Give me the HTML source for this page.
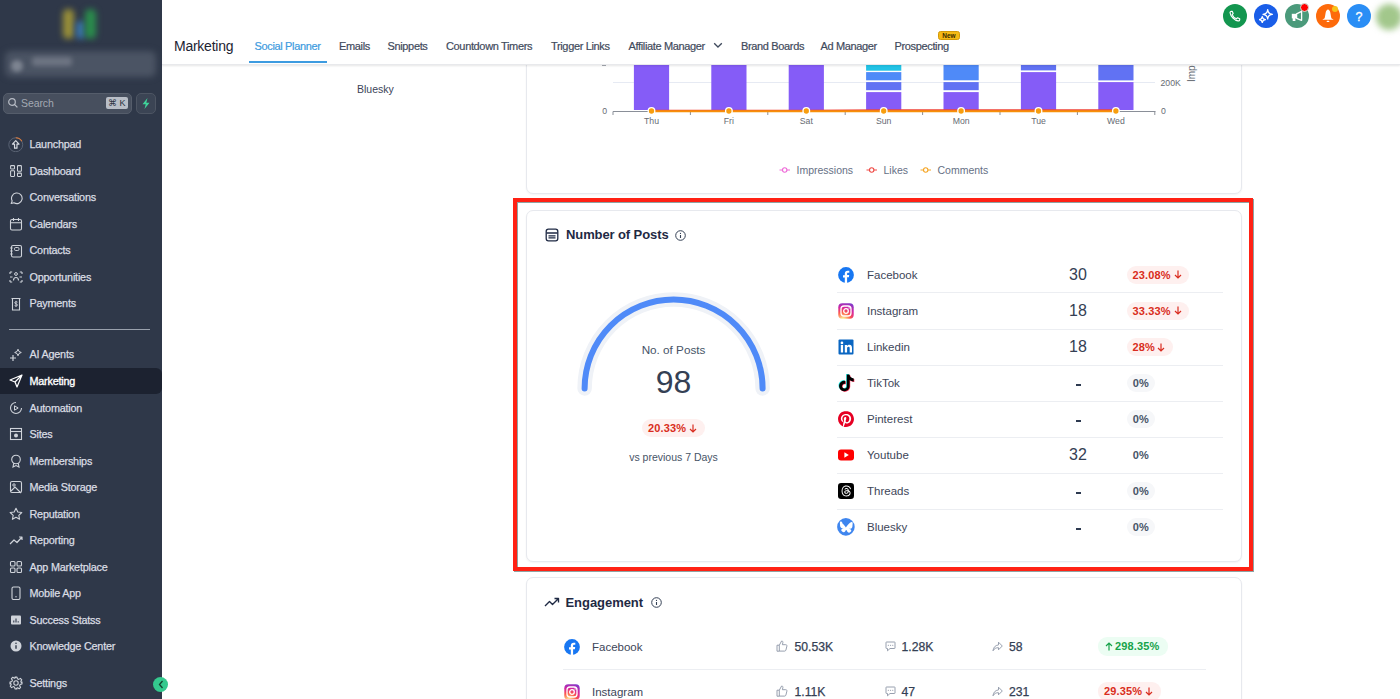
<!DOCTYPE html>
<html><head><meta charset="utf-8">
<style>
*{box-sizing:border-box;margin:0;padding:0}
html,body{width:1400px;height:699px;overflow:hidden;background:#fff;font-family:"Liberation Sans",sans-serif;position:relative}
.a{position:absolute;white-space:nowrap}
#sb{position:absolute;left:0;top:0;width:162px;height:699px;background:#2f3849;z-index:5}
.ni{position:absolute;left:0;width:162px;height:26px;}
.ni .t{position:absolute;left:29.5px;top:5.8px;font-size:10.8px;letter-spacing:-0.2px;color:#dadde3;line-height:14px;-webkit-text-stroke:0.25px #dadde3}
.ni svg{position:absolute;left:9px;top:6px;width:14px;height:14px}
#hd{position:absolute;left:162px;top:0;width:1238px;height:65px;background:#fff;z-index:4;box-shadow:0 1px 2px rgba(0,0,0,0.10);border-bottom:1px solid #e8e9ec}
.tab{position:absolute;top:38.5px;font-size:11px;letter-spacing:-0.35px;color:#3f4a5c;line-height:14px;-webkit-text-stroke:0.2px #3f4a5c}
.card{position:absolute;left:526px;width:716px;background:#fff;border:1px solid #e7e9ee;border-radius:7px;box-shadow:0 1px 2px rgba(16,24,40,0.05)}
.pl{position:absolute;left:838px;width:16px;height:16px;overflow:visible}
.pn{position:absolute;left:867px;font-size:11.5px;color:#3d4659;line-height:14px;margin-top:0.6px}
.pv{position:absolute;font-size:16px;color:#344054;line-height:18px}
.pill{position:absolute;height:18px;border-radius:9px;font-size:11px;font-weight:700;letter-spacing:0.15px;line-height:18px;padding:0 6px}
.red{background:#fef0ef;color:#d92d20}
.gry{background:#f6f7f9;color:#475467}
.grn{background:#ecfdf3;color:#16a34a}
.dv{position:absolute;left:837px;width:386px;height:1px;background:#eceef2}
</style></head>
<body>
<!-- SIDEBAR -->
<div id="sb">
  <div class="a" style="left:63px;top:9px;width:11px;height:30px;background:#9a9038;border-radius:5px;filter:blur(3px)"></div>
  <div class="a" style="left:76px;top:21px;width:9px;height:18px;background:#3a74ad;border-radius:4px;filter:blur(3px)"></div>
  <div class="a" style="left:85px;top:9px;width:11px;height:30px;background:#2a8d4c;border-radius:5px;filter:blur(3px)"></div>
  <div class="a" style="left:5px;top:51px;width:151px;height:26px;background:#4b5464;border-radius:6px;filter:blur(3px)"></div>
  <div class="a" style="left:11px;top:60px;width:12px;height:12px;background:#7d8491;border-radius:50%;filter:blur(2px)"></div>
  <div class="a" style="left:32px;top:57px;width:40px;height:9px;background:#6e7583;border-radius:3px;filter:blur(2.5px)"></div>

  <div class="a" style="left:3px;top:93px;width:129px;height:21px;background:#474f5e;border:1px solid #555d6b;border-radius:5px"></div>
  <svg class="a" style="left:7px;top:97px" width="12" height="12" viewBox="0 0 12 12"><circle cx="5" cy="5" r="3.3" fill="none" stroke="#b8bdc6" stroke-width="1.2"/><path d="M7.4 7.4l3 3" stroke="#b8bdc6" stroke-width="1.3"/></svg>
  <span class="a" style="left:21px;top:97px;font-size:10.5px;color:#a3a9b3;line-height:12px;letter-spacing:-0.1px">Search</span>
  <div class="a" style="left:106px;top:97px;width:22px;height:12px;background:#b9bec7;border-radius:2px"></div>
  <span class="a" style="left:108px;top:97px;font-size:9px;color:#2b3240;line-height:12px">&#8984;&nbsp;K</span>
  <div class="a" style="left:136px;top:93px;width:20px;height:21px;background:#3b4454;border:1px solid #4d5563;border-radius:5px"></div>
  <svg class="a" style="left:141px;top:98px" width="10" height="11" viewBox="0 0 10 11"><path d="M6.5 0L1.5 6.3h3.2L3.5 11l5-6.3H5.3z" fill="#3fd49a"/></svg>
  <div class="a" style="left:9px;top:328.5px;width:141px;height:1px;background:#9aa1ad"></div>
<div class="ni" style="top:131.7px"><svg viewBox="0 0 14 14" style="left:8.3px;top:5px;width:15.5px;height:15.5px"><circle cx="7" cy="7" r="6.3" fill="none" stroke="#596273" stroke-width="0.9"/><path d="M7 0.7a6.3 6.3 0 0 1 5.5 3.2" fill="none" stroke="#e07b39" stroke-width="1"/><path d="M7 3.3L4 6.4H5.9v3.700h2.2V6.400H10z" fill="none" stroke="#d8dce3" stroke-width="1.05" stroke-linejoin="round"/></svg><span class="t">Launchpad</span></div>
<div class="ni" style="top:158.3px"><svg viewBox="0 0 14 14"><rect x="1.6" y="1.6" width="3.9" height="3.3" rx="0.6" fill="none" stroke="#cfd3da" stroke-width="1.05"/><rect x="1.6" y="6.7" width="3.9" height="5.7" rx="0.6" fill="none" stroke="#cfd3da" stroke-width="1.05"/><rect x="8.5" y="1.6" width="3.9" height="5.7" rx="0.6" fill="none" stroke="#cfd3da" stroke-width="1.05"/><rect x="8.5" y="9.1" width="3.9" height="3.3" rx="0.6" fill="none" stroke="#cfd3da" stroke-width="1.05"/></svg><span class="t">Dashboard</span></div>
<div class="ni" style="top:184.6px"><svg viewBox="0 0 14 14"><path d="M2.2 12.5l1-2.6A5.3 5.3 0 1 1 5 11.8z" fill="none" stroke="#cfd3da" stroke-width="1.1" stroke-linejoin="round"/></svg><span class="t">Conversations</span></div>
<div class="ni" style="top:211.1px"><svg viewBox="0 0 14 14"><rect x="1.5" y="2.5" width="11" height="10.5" rx="1.5" fill="none" stroke="#cfd3da" stroke-width="1.1"/><path d="M1.5 5.8h11M4.5 1v3M9.5 1v3" stroke="#cfd3da" stroke-width="1.1"/></svg><span class="t">Calendars</span></div>
<div class="ni" style="top:237.6px"><svg viewBox="0 0 14 14"><rect x="2.5" y="1.5" width="10" height="11.5" rx="1.5" fill="none" stroke="#cfd3da" stroke-width="1.1"/><path d="M1.2 4h2.5M1.2 7h2.5M1.2 10h2.5" stroke="#cfd3da" stroke-width="1"/><rect x="5.5" y="3.5" width="4.5" height="3" rx="1.2" fill="none" stroke="#cfd3da" stroke-width="1"/></svg><span class="t">Contacts</span></div>
<div class="ni" style="top:264.1px"><svg viewBox="0 0 14 14"><circle cx="7" cy="4" r="1.4" fill="none" stroke="#cfd3da" stroke-width="1"/><path d="M1 2h2.2M1 2v2M13 2h-2.2M13 2v2M1 12h2.2M1 12v-2M13 12h-2.2M13 12v-2M4.5 10.5c0-2 1-3 2.5-3s2.5 1 2.5 3" fill="none" stroke="#cfd3da" stroke-width="1.1"/><path d="M1 7h2.5M10.5 7H13" stroke="#cfd3da" stroke-width="1.1"/></svg><span class="t">Opportunities</span></div>
<div class="ni" style="top:290.6px"><svg viewBox="0 0 14 14"><path d="M2.5 1.5h9M3.5 1.5v11.5h7V1.5" fill="none" stroke="#cfd3da" stroke-width="1.1"/><path d="M8.5 5.2c-.4-.6-2.8-.8-2.8.6 0 1.3 2.8.8 2.8 2.2 0 1.3-2.4 1.2-2.9.5M7 3.8v6" fill="none" stroke="#cfd3da" stroke-width="0.9"/></svg><span class="t">Payments</span></div>
<div class="ni" style="top:341.7px"><svg viewBox="0 0 14 14"><path d="M9 1.2l1 2.3 2.3 1-2.3 1L9 7.8l-1-2.3-2.3-1 2.3-1z" fill="none" stroke="#cfd3da" stroke-width="1"/><path d="M4 7v6M1 10h6" stroke="#cfd3da" stroke-width="1.2"/></svg><span class="t">AI Agents</span></div>
<div class="ni" style="top:368.4px;background:#1c2230;border-radius:0 6px 6px 0;"><svg viewBox="0 0 14 14"><path d="M13 1L1 6l5 2 2 5z M13 1L6 8" fill="none" stroke="#ffffff" stroke-width="1.2" stroke-linejoin="round"/></svg><span class="t" style="color:#fff;-webkit-text-stroke:0.35px #fff">Marketing</span></div>
<div class="ni" style="top:394.9px"><svg viewBox="0 0 14 14"><path d="M12.5 7A5.5 5.5 0 1 1 7 1.5" fill="none" stroke="#cfd3da" stroke-width="1.1"/><path d="M5.5 4.8v4.4L9.2 7z" fill="none" stroke="#cfd3da" stroke-width="1"/></svg><span class="t">Automation</span></div>
<div class="ni" style="top:421.4px"><svg viewBox="0 0 14 14"><rect x="1.5" y="1.5" width="11" height="11" fill="none" stroke="#cfd3da" stroke-width="1.1"/><path d="M1.5 4.5h11" stroke="#cfd3da" stroke-width="1.1"/><circle cx="7" cy="8.5" r="2" fill="#cfd3da"/></svg><span class="t">Sites</span></div>
<div class="ni" style="top:447.9px"><svg viewBox="0 0 14 14"><circle cx="7" cy="5.5" r="4.3" fill="none" stroke="#cfd3da" stroke-width="1.1"/><path d="M4.8 9.2L4 13l3-1.5 3 1.5-.8-3.8" fill="none" stroke="#cfd3da" stroke-width="1.1"/></svg><span class="t">Memberships</span></div>
<div class="ni" style="top:474.4px"><svg viewBox="0 0 14 14"><rect x="1.5" y="1.5" width="11" height="11" rx="1.5" fill="none" stroke="#cfd3da" stroke-width="1.1"/><circle cx="5" cy="5" r="1.2" fill="none" stroke="#cfd3da" stroke-width="1"/><path d="M2 11l4-4 6 6" fill="none" stroke="#cfd3da" stroke-width="1.1"/></svg><span class="t">Media Storage</span></div>
<div class="ni" style="top:500.9px"><svg viewBox="0 0 14 14"><path d="M7 1.2l1.8 3.8 4 .5-3 2.8.8 4L7 10.3l-3.6 2 .8-4-3-2.8 4-.5z" fill="none" stroke="#cfd3da" stroke-width="1.1" stroke-linejoin="round"/></svg><span class="t">Reputation</span></div>
<div class="ni" style="top:527.4px"><svg viewBox="0 0 14 14"><path d="M1 11l4-4 3 2.5L13 4M10 4h3v3" fill="none" stroke="#cfd3da" stroke-width="1.2" stroke-linejoin="round"/></svg><span class="t">Reporting</span></div>
<div class="ni" style="top:553.9px"><svg viewBox="0 0 14 14"><rect x="1.5" y="1.5" width="4.5" height="4.5" rx="1" fill="none" stroke="#cfd3da" stroke-width="1.1"/><rect x="8" y="1.5" width="4.5" height="4.5" rx="1" fill="none" stroke="#cfd3da" stroke-width="1.1"/><rect x="1.5" y="8" width="4.5" height="4.5" rx="1" fill="none" stroke="#cfd3da" stroke-width="1.1"/><rect x="8" y="8" width="4.5" height="4.5" rx="1" fill="none" stroke="#cfd3da" stroke-width="1.1"/></svg><span class="t">App Marketplace</span></div>
<div class="ni" style="top:580.4px"><svg viewBox="0 0 14 14"><rect x="3" y="1" width="8" height="12.5" rx="1.5" fill="none" stroke="#cfd3da" stroke-width="1.1"/><circle cx="7" cy="10.8" r="0.7" fill="#cfd3da"/></svg><span class="t">Mobile App</span></div>
<div class="ni" style="top:606.9px"><svg viewBox="0 0 14 14"><rect x="2" y="2.5" width="10" height="9" rx="1" fill="#cfd3da"/><path d="M4.8 9.5v-2M7 9.5v-4M9.2 9.5v-1.2" stroke="#2f3849" stroke-width="1.1"/></svg><span class="t">Success Statss</span></div>
<div class="ni" style="top:633.4px"><svg viewBox="0 0 14 14"><circle cx="7" cy="7" r="5.5" fill="#cfd3da"/><path d="M7 6.2v3.6" stroke="#2f3849" stroke-width="1.4"/><circle cx="7" cy="4.3" r="0.8" fill="#2f3849"/></svg><span class="t">Knowledge Center</span></div>
<div class="ni" style="top:669.9px"><svg viewBox="0 0 14 14"><circle cx="7" cy="7" r="2.2" fill="none" stroke="#cfd3da" stroke-width="1.1"/><path d="M6 1h2l.4 1.8 1.4.6 1.6-1 1.4 1.4-1 1.6.6 1.4L13 6v2l-1.8.4-.6 1.4 1 1.6-1.4 1.4-1.6-1-1.4.6L8 13H6l-.4-1.8-1.4-.6-1.6 1-1.4-1.4 1-1.6-.6-1.4L1 8V6l1.8-.4.6-1.4-1-1.6 1.4-1.4 1.6 1 1.4-.6z" fill="none" stroke="#cfd3da" stroke-width="1.1" stroke-linejoin="round"/></svg><span class="t">Settings</span></div>
  <div class="a" style="left:153px;top:677px;width:15px;height:15px;border-radius:50%;background:#34c98e;z-index:6"></div>
  <svg class="a" style="left:157px;top:680px;z-index:7" width="8" height="9" viewBox="0 0 8 9"><path d="M5.5 1L2.5 4.5 5.5 8" fill="none" stroke="#14432f" stroke-width="1.3"/></svg>
</div>
<!-- HEADER -->
<div id="hd">
  <span class="a" style="left:12px;top:37.5px;font-size:14px;letter-spacing:-0.25px;color:#1d2433;line-height:16px">Marketing</span>
  <span class="tab" style="left:92.5px;color:#3d9be0;-webkit-text-stroke:0.2px #3d9be0">Social Planner</span>
  <div class="a" style="left:87px;top:61px;width:78px;height:2px;background:#3d9be0"></div>
  <span class="tab" style="left:177px">Emails</span>
  <span class="tab" style="left:225.5px">Snippets</span>
  <span class="tab" style="left:284px">Countdown Timers</span>
  <span class="tab" style="left:389px">Trigger Links</span>
  <span class="tab" style="left:466.5px">Affiliate Manager</span>
  <svg class="a" style="left:551px;top:42px" width="10" height="7" viewBox="0 0 10 7"><path d="M1.2 1.2L5 5l3.8-3.8" fill="none" stroke="#3f4a5c" stroke-width="1.3"/></svg>
  <span class="tab" style="left:579px">Brand Boards</span>
  <span class="tab" style="left:658.5px">Ad Manager</span>
  <span class="tab" style="left:732.5px">Prospecting</span>
  <div class="a" style="left:776px;top:31px;width:22px;height:9px;background:#f5b915;border:0.5px solid #d39a0a;border-radius:2.5px;font-size:6.5px;font-weight:700;color:#3a2c00;line-height:8px;text-align:center">New</div>
  <div class="a" style="left:1061px;top:4px;width:24px;height:24px;border-radius:50%;background:#13964f"></div>
  <svg class="a" style="left:1067px;top:10px" width="12" height="12" viewBox="0 0 12 12"><path d="M2.4 1.3C1.500 1.300 .900 2 1.100 3C1.700 6.500 5.500 10.300 9 10.900C10 11.100 10.700 10.500 10.700 9.700L10.700 8.800L8.600 7.800L7.400 8.800C5.800 8.200 3.800 6.200 3.200 4.600L4.200 3.400L3.200 1.300Z" fill="none" stroke="#fff" stroke-width="1.15" stroke-linejoin="round"/></svg>
  <div class="a" style="left:1092px;top:4px;width:24px;height:24px;border-radius:50%;background:#1a5ee8"></div>
  <svg class="a" style="left:1097px;top:9px" width="14" height="14" viewBox="0 0 14 14"><path d="M8.7 0.6Q9.1 4.9 13.4 5.3Q9.1 5.7 8.7 10Q8.3 5.7 4 5.3Q8.3 4.9 8.7 0.6Z" fill="none" stroke="#fff" stroke-width="1.25" stroke-linejoin="round"/><path d="M3.3 7.5Q3.6 10.3 6.4 10.6Q3.6 10.9 3.3 13.7Q3 10.9 0.2 10.6Q3 10.3 3.3 7.5Z" fill="none" stroke="#fff" stroke-width="1.25" stroke-linejoin="round"/></svg>
  <div class="a" style="left:1123px;top:4px;width:24px;height:24px;border-radius:50%;background:#4b9a7b"></div>
  <svg class="a" style="left:1129px;top:10px" width="12" height="12" viewBox="0 0 12 12"><rect x="0.8" y="3.8" width="4.9" height="4.6" fill="#fff"/><rect x="1.7" y="8" width="2.7" height="3" fill="#fff"/><path d="M5.6 3.9L10.6 1.3V10.3L5.6 8.3z" fill="none" stroke="#fff" stroke-width="1.3" stroke-linejoin="round"/></svg>
  <div class="a" style="left:1138px;top:3px;width:9px;height:9px;border-radius:50%;background:#ff0000;border:0.8px solid #cfe3da"></div>
  <div class="a" style="left:1154px;top:4px;width:24px;height:24px;border-radius:50%;background:#fd6a0b"></div>
  <svg class="a" style="left:1160px;top:9px" width="12" height="14" viewBox="0 0 12 14"><path d="M6 0.6C4.900 0.600 4.100 2 3.700 3.600L3 7.400 2.600 9.200 0.300 10.700H11.700L9.400 9.200 9 7.400 8.300 3.600C7.900 2 7.100 0.600 6 0.600z" fill="#fff"/><rect x="4.700" y="11.800" width="2.600" height="1.200" rx="0.5" fill="#fff"/></svg>
  <div class="a" style="left:1170px;top:6px;width:6px;height:6px;border-radius:50%;background:#f6c21a"></div>
  <div class="a" style="left:1185px;top:4px;width:24px;height:24px;border-radius:50%;background:#2a8ef5"></div>
  <span class="a" style="left:1185px;top:8.5px;width:24px;text-align:center;font-size:12.5px;font-weight:400;color:#fff;line-height:16px;-webkit-text-stroke:0.3px #fff">?</span>
  <div class="a" style="left:1214px;top:3.5px;width:26px;height:26px;border-radius:50%;background:#a2c78b;filter:blur(3px)"></div>
</div>
<!-- CONTENT -->
<div class="a" style="left:602px;top:65px;width:4px;height:1px;background:#9a9ea5;z-index:4"></div>
<span class="a" style="left:357px;top:82.8px;font-size:10.5px;color:#3b4458;line-height:12px">Bluesky</span>
<div class="card" style="top:20px;height:174px"></div>
<svg class="a" style="left:0;top:0;z-index:1" width="1400" height="200" viewBox="0 0 1400 200">
<line x1="613" y1="82.5" x2="1155" y2="82.5" stroke="#e6eaf3" stroke-width="1"/>
<rect x="633.9" y="0" width="35.2" height="110.0" fill="#855cf7"/>
<rect x="711.3" y="0" width="35.2" height="110.0" fill="#855cf7"/>
<rect x="788.7" y="0" width="35.2" height="110.0" fill="#855cf7"/>
<rect x="866.1" y="0" width="35.2" height="70.7" fill="#22c3e6"/>
<rect x="866.1" y="72.1" width="35.2" height="8.2" fill="#4f8af8"/>
<rect x="866.1" y="82.1" width="35.2" height="8.1" fill="#6172f3"/>
<rect x="866.1" y="92.1" width="35.2" height="17.9" fill="#855cf7"/>
<rect x="943.5" y="0" width="35.2" height="80.3" fill="#4f8af8"/>
<rect x="943.5" y="82.1" width="35.2" height="8.1" fill="#6172f3"/>
<rect x="943.5" y="92.1" width="35.2" height="17.9" fill="#855cf7"/>
<rect x="1020.9" y="0" width="35.2" height="70.4" fill="#6172f3"/>
<rect x="1020.9" y="72.1" width="35.2" height="37.9" fill="#855cf7"/>
<rect x="1098.3" y="0" width="35.2" height="80.4" fill="#6172f3"/>
<rect x="1098.3" y="82.1" width="35.2" height="27.9" fill="#855cf7"/>
<line x1="613" y1="111.5" x2="1155.5" y2="111.5" stroke="#8a8f98" stroke-width="1"/>
<line x1="613.0" y1="111.5" x2="613.0" y2="115" stroke="#8a8f98" stroke-width="1"/>
<line x1="690.4" y1="111.5" x2="690.4" y2="115" stroke="#8a8f98" stroke-width="1"/>
<line x1="767.8" y1="111.5" x2="767.8" y2="115" stroke="#8a8f98" stroke-width="1"/>
<line x1="845.2" y1="111.5" x2="845.2" y2="115" stroke="#8a8f98" stroke-width="1"/>
<line x1="922.6" y1="111.5" x2="922.6" y2="115" stroke="#8a8f98" stroke-width="1"/>
<line x1="1000.0" y1="111.5" x2="1000.0" y2="115" stroke="#8a8f98" stroke-width="1"/>
<line x1="1077.4" y1="111.5" x2="1077.4" y2="115" stroke="#8a8f98" stroke-width="1"/>
<line x1="1154.8" y1="111.5" x2="1154.8" y2="115" stroke="#8a8f98" stroke-width="1"/>
<polyline points="651.5,110.8 728.9,110.8 806.3,110.8 883.7,110.3 961.1,110.3 1038.5,110.3 1115.9,110.3" fill="none" stroke="#f04438" stroke-width="2"/>
<polyline points="651.5,111.3 728.9,111.3 806.3,111.3 883.7,111.3 961.1,111.3 1038.5,111.3 1115.9,111.3" fill="none" stroke="#f79009" stroke-width="2"/>
<circle cx="651.5" cy="111" r="3.3" fill="#f79e0f" stroke="#fff" stroke-width="1.3"/>
<circle cx="728.9" cy="111" r="3.3" fill="#f79e0f" stroke="#fff" stroke-width="1.3"/>
<circle cx="806.3" cy="111" r="3.3" fill="#f79e0f" stroke="#fff" stroke-width="1.3"/>
<circle cx="883.7" cy="111" r="3.3" fill="#f79e0f" stroke="#fff" stroke-width="1.3"/>
<circle cx="961.1" cy="111" r="3.3" fill="#f79e0f" stroke="#fff" stroke-width="1.3"/>
<circle cx="1038.5" cy="111" r="3.3" fill="#f79e0f" stroke="#fff" stroke-width="1.3"/>
<circle cx="1115.9" cy="111" r="3.3" fill="#f79e0f" stroke="#fff" stroke-width="1.3"/>
</svg>
<span class="a" style="left:631.5px;top:116px;width:40px;text-align:center;font-size:8.7px;color:#666b73;line-height:10px">Thu</span>
<span class="a" style="left:708.9px;top:116px;width:40px;text-align:center;font-size:8.7px;color:#666b73;line-height:10px">Fri</span>
<span class="a" style="left:786.3px;top:116px;width:40px;text-align:center;font-size:8.7px;color:#666b73;line-height:10px">Sat</span>
<span class="a" style="left:863.7px;top:116px;width:40px;text-align:center;font-size:8.7px;color:#666b73;line-height:10px">Sun</span>
<span class="a" style="left:941.1px;top:116px;width:40px;text-align:center;font-size:8.7px;color:#666b73;line-height:10px">Mon</span>
<span class="a" style="left:1018.5px;top:116px;width:40px;text-align:center;font-size:8.7px;color:#666b73;line-height:10px">Tue</span>
<span class="a" style="left:1095.9px;top:116px;width:40px;text-align:center;font-size:8.7px;color:#666b73;line-height:10px">Wed</span>
<span class="a" style="left:597px;top:106px;width:10px;text-align:right;font-size:8.7px;color:#666b73;line-height:10px">0</span>
<span class="a" style="left:1161px;top:106px;font-size:8.7px;color:#666b73;line-height:10px">0</span>
<span class="a" style="left:1160.5px;top:77.5px;font-size:8.7px;color:#666b73;line-height:10px">200K</span>
<span class="a" style="left:1187px;top:68px;font-size:10px;color:#666b73;line-height:10px;transform:rotate(-90deg);transform-origin:0 0;top:81.5px">Impressions</span>
<svg class="a" style="left:779px;top:165px" width="12" height="10" viewBox="0 0 12 10"><path d="M0.5 5h10.5" stroke="#ee6ad8" stroke-width="1"/><circle cx="5.7" cy="5" r="2.2" fill="#fff" stroke="#ee6ad8" stroke-width="1.1"/></svg>
<span class="a" style="left:796.5px;top:164px;font-size:10.5px;color:#667085;line-height:12px">Impressions</span>
<svg class="a" style="left:866px;top:165px" width="12" height="10" viewBox="0 0 12 10"><path d="M0.5 5h10.5" stroke="#ef4a45" stroke-width="1"/><circle cx="5.7" cy="5" r="2.2" fill="#fff" stroke="#ef4a45" stroke-width="1.1"/></svg>
<span class="a" style="left:883.5px;top:164px;font-size:10.5px;color:#667085;line-height:12px">Likes</span>
<svg class="a" style="left:920px;top:165px" width="12" height="10" viewBox="0 0 12 10"><path d="M0.5 5h10.5" stroke="#f5a524" stroke-width="1"/><circle cx="5.7" cy="5" r="2.2" fill="#fff" stroke="#f5a524" stroke-width="1.1"/></svg>
<span class="a" style="left:937.5px;top:164px;font-size:10.5px;color:#667085;line-height:12px">Comments</span>

<div class="a" style="left:514px;top:199px;width:740px;height:373px;border:4px solid #8fa3a3;z-index:3;filter:blur(0.4px)"></div>
<div class="a" style="left:513px;top:198px;width:740px;height:373px;border:4px solid #ff2114;z-index:3"></div>
<div class="card" style="top:209.5px;height:352px"></div>
<svg class="a" style="left:545px;top:228px" width="14" height="14" viewBox="0 0 14 14"><rect x="1.2" y="1.2" width="11.6" height="11.6" rx="2.2" fill="none" stroke="#1f2a44" stroke-width="1.3"/><path d="M1.5 5h11M3.5 7.8h7M3.5 9.8h7" stroke="#1f2a44" stroke-width="1.3"/></svg>
<span class="a" style="left:566px;top:227px;font-size:13px;font-weight:700;letter-spacing:-0.1px;color:#1f2a44;line-height:16px">Number of Posts</span>
<svg class="a" style="left:675px;top:229.5px" width="11" height="11" viewBox="0 0 11 11"><circle cx="5.5" cy="5.5" r="4.8" fill="none" stroke="#344054" stroke-width="1"/><path d="M5.5 5v3" stroke="#344054" stroke-width="1.1"/><circle cx="5.5" cy="3.4" r="0.6" fill="#344054"/></svg>
<svg class="a" style="left:560px;top:280px" width="230" height="130" viewBox="560 280 230 130"><path d="M584.6 388.5 A89 89 0 0 1 762.6 388.5" fill="none" stroke="#eff2f7" stroke-width="14.5" stroke-linecap="round"/><path d="M584.6 388.5 A89 89 0 0 1 762.6 388.5" fill="none" stroke="#4f8af8" stroke-width="6" stroke-linecap="round"/></svg>
<span class="a" style="left:600px;top:343px;width:147px;text-align:center;font-size:11.7px;color:#475467;line-height:14px">No. of Posts</span>
<span class="a" style="left:600px;top:365px;width:147px;text-align:center;font-size:32px;color:#344054;line-height:34px">98</span>
<div class="pill red" style="left:642px;top:419px;width:62.5px;padding:0 0 0 6px">20.33%<svg style="position:absolute;right:7.5px;top:4.5px" width="8" height="9" viewBox="0 0 8 9"><path d="M4 0.5v7.5M1 5l3 3 3-3" fill="none" stroke="#d92d20" stroke-width="1.2"/></svg></div>
<span class="a" style="left:600px;top:451px;width:147px;text-align:center;font-size:10.5px;color:#475467;line-height:12px">vs previous 7 Days</span>
<svg class="pl" style="top:266.6px" viewBox="0 0 16 16"><circle cx="8" cy="8" r="7.9" fill="#1877f2"/><path d="M9.1 16V10.3h1.8l.3-2.2H9.1V6.800c0-.6.2-1.100 1.100-1.100h1.100V3.800c-.2 0-.9-.1-1.700-.1-1.700 0-2.800 1-2.800 2.900v1.600H5v2.200h1.800V16z" fill="#fff"/></svg>
<span class="pn" style="top:267.1px">Facebook</span>
<span class="pv" style="left:1048px;width:60px;text-align:center;top:265.6px">30</span>
<div class="pill red" style="left:1126.5px;top:265.6px;width:62.5px;padding:0 0 0 6px">23.08%<svg style="position:absolute;right:7.5px;top:4.5px" width="8" height="9" viewBox="0 0 8 9"><path d="M4 0.5v7.5M1 5l3 3 3-3" fill="none" stroke="#d92d20" stroke-width="1.2"/></svg></div>
<div class="dv" style="top:292.3px"></div>
<svg class="pl" style="top:302.8px" viewBox="0 0 16 16"><defs><radialGradient id="ig" cx="0.3" cy="1.07" r="1.25"><stop offset="0" stop-color="#fdf497"/><stop offset="0.05" stop-color="#fdf497"/><stop offset="0.4" stop-color="#fd5949"/><stop offset="0.65" stop-color="#d6249f"/><stop offset="1" stop-color="#6a3fd6"/></radialGradient></defs><rect x="0.3" y="0.3" width="15.4" height="15.4" rx="4" fill="url(#ig)"/><rect x="3" y="3" width="10" height="10" rx="3" fill="none" stroke="#fff" stroke-width="1.3"/><circle cx="8" cy="8" r="2.3" fill="none" stroke="#fff" stroke-width="1.3"/><circle cx="11.1" cy="4.9" r="0.7" fill="#fff"/></svg>
<span class="pn" style="top:303.3px">Instagram</span>
<span class="pv" style="left:1048px;width:60px;text-align:center;top:301.8px">18</span>
<div class="pill red" style="left:1126.5px;top:301.8px;width:62.5px;padding:0 0 0 6px">33.33%<svg style="position:absolute;right:7.5px;top:4.5px" width="8" height="9" viewBox="0 0 8 9"><path d="M4 0.5v7.5M1 5l3 3 3-3" fill="none" stroke="#d92d20" stroke-width="1.2"/></svg></div>
<div class="dv" style="top:328.5px"></div>
<svg class="pl" style="top:339.0px" viewBox="0 0 16 16"><rect x="0.5" y="0.5" width="15" height="15" rx="1" fill="#0a66c2"/><rect x="2.8" y="6" width="2.3" height="7.5" fill="#fff"/><circle cx="3.950" cy="3.900" r="1.350" fill="#fff"/><path d="M6.800 6h2.200v1.100c.4-.7 1.200-1.300 2.400-1.300 2.100 0 2.600 1.300 2.600 3.200v4.500h-2.300V9.600c0-.9-.1-1.800-1.200-1.800s-1.400.8-1.400 1.800v3.900H6.800z" fill="#fff"/></svg>
<span class="pn" style="top:339.5px">Linkedin</span>
<span class="pv" style="left:1048px;width:60px;text-align:center;top:338.0px">18</span>
<div class="pill red" style="left:1126.5px;top:338.0px;width:46px;padding:0 0 0 6px">28%<svg style="position:absolute;right:7.5px;top:4.5px" width="8" height="9" viewBox="0 0 8 9"><path d="M4 0.5v7.5M1 5l3 3 3-3" fill="none" stroke="#d92d20" stroke-width="1.2"/></svg></div>
<div class="dv" style="top:364.7px"></div>
<svg class="pl" style="top:375.0px" viewBox="0 0 16 16"><path transform="translate(-0.6 -1.0) scale(0.7)" d="M12.525.02c1.31-.02 2.61-.01 3.91-.02.08 1.53.63 3.09 1.75 4.17 1.12 1.11 2.7 1.62 4.24 1.79v4.03c-1.44-.05-2.89-.35-4.2-.97-.57-.26-1.1-.59-1.62-.93-.01 2.92.01 5.84-.02 8.75-.08 1.4-.54 2.79-1.35 3.94-1.31 1.92-3.58 3.17-5.91 3.21-1.43.08-2.86-.31-4.08-1.03-2.02-1.19-3.44-3.37-3.65-5.71-.02-.5-.03-1-.01-1.49.18-1.9 1.12-3.72 2.58-4.96 1.66-1.44 3.98-2.13 6.150-1.720.02 1.480-.04 2.960-.04 4.440-.99-.32-2.150-.23-3.020.37-.63.41-1.110 1.040-1.360 1.750-.21.51-.15 1.070-.14 1.610.24 1.640 1.820 3.020 3.500 2.870 1.120-.01 2.190-.66 2.770-1.610.19-.33.4-.67.41-1.060.1-1.790.06-3.570.07-5.360.01-4.030-.01-8.050.02-12.070z" fill="#25f4ee"/><path transform="translate(0.6 -0.1) scale(0.7)" d="M12.525.02c1.31-.02 2.61-.01 3.91-.02.08 1.53.63 3.09 1.75 4.17 1.12 1.11 2.7 1.62 4.24 1.79v4.03c-1.44-.05-2.89-.35-4.2-.97-.57-.26-1.1-.59-1.62-.93-.01 2.92.01 5.84-.02 8.75-.08 1.4-.54 2.79-1.35 3.94-1.31 1.92-3.58 3.17-5.91 3.21-1.43.08-2.86-.31-4.08-1.03-2.02-1.19-3.44-3.37-3.65-5.71-.02-.5-.03-1-.01-1.49.18-1.9 1.12-3.72 2.58-4.96 1.66-1.44 3.98-2.13 6.150-1.720.02 1.480-.04 2.960-.04 4.440-.99-.32-2.150-.23-3.020.37-.63.41-1.110 1.040-1.360 1.750-.21.51-.15 1.070-.14 1.610.24 1.640 1.820 3.020 3.500 2.870 1.120-.01 2.190-.66 2.770-1.610.19-.33.4-.67.41-1.060.1-1.790.06-3.570.07-5.360.01-4.030-.01-8.050.02-12.070z" fill="#fe2c55"/><path transform="translate(0 -0.55) scale(0.7)" d="M12.525.02c1.31-.02 2.61-.01 3.91-.02.08 1.53.63 3.09 1.75 4.17 1.12 1.11 2.7 1.62 4.24 1.79v4.03c-1.44-.05-2.89-.35-4.2-.97-.57-.26-1.1-.59-1.62-.93-.01 2.92.01 5.84-.02 8.75-.08 1.4-.54 2.79-1.35 3.94-1.31 1.92-3.58 3.17-5.91 3.21-1.43.08-2.86-.31-4.08-1.03-2.02-1.19-3.44-3.37-3.65-5.71-.02-.5-.03-1-.01-1.49.18-1.9 1.12-3.72 2.58-4.96 1.66-1.44 3.98-2.13 6.150-1.720.02 1.480-.04 2.960-.04 4.440-.99-.32-2.150-.23-3.020.37-.63.41-1.110 1.040-1.360 1.750-.21.51-.15 1.070-.14 1.610.24 1.640 1.820 3.020 3.500 2.870 1.120-.01 2.190-.66 2.770-1.610.19-.33.4-.67.41-1.060.1-1.790.06-3.570.07-5.360.01-4.030-.01-8.050.02-12.070z" fill="#000"/></svg>
<span class="pn" style="top:375.5px">TikTok</span>
<div class="a" style="left:1076px;top:384px;width:5px;height:2px;background:#2d3a50"></div>
<div class="pill gry" style="left:1126.5px;top:374.0px;width:28.5px;padding:0;text-align:center">0%</div>
<div class="dv" style="top:400.7px"></div>
<svg class="pl" style="top:411.1px" viewBox="0 0 16 16"><path transform="scale(0.6667)" d="M12.017 0C5.396 0 .029 5.367.029 11.987c0 5.079 3.158 9.417 7.618 11.162-.105-.949-.199-2.403.041-3.439.219-.937 1.406-5.957 1.406-5.957s-.359-.72-.359-1.781c0-1.663.967-2.911 2.168-2.911 1.024 0 1.518.769 1.518 1.688 0 1.029-.653 2.567-.992 3.992-.285 1.193.6 2.165 1.775 2.165 2.128 0 3.768-2.245 3.768-5.487 0-2.861-2.063-4.869-5.008-4.869-3.410 0-5.409 2.562-5.409 5.199 0 1.033.394 2.143.889 2.741.099.12.112.225.085.345-.09.375-.293 1.199-.334 1.363-.053.225-.172.271-.401.165-1.495-.69-2.433-2.878-2.433-4.646 0-3.776 2.748-7.252 7.920-7.252 4.158 0 7.392 2.967 7.392 6.923 0 4.135-2.607 7.462-6.233 7.462-1.214 0-2.354-.629-2.758-1.379l-.749 2.848c-.269 1.045-1.004 2.352-1.498 3.146 1.123.345 2.306.535 3.550.535 6.607 0 11.985-5.365 11.985-11.987C23.970 5.390 18.592.026 11.985.026L12.017 0z" fill="#e60023"/></svg>
<span class="pn" style="top:411.6px">Pinterest</span>
<div class="a" style="left:1076px;top:420px;width:5px;height:2px;background:#2d3a50"></div>
<div class="pill gry" style="left:1126.5px;top:410.1px;width:28.5px;padding:0;text-align:center">0%</div>
<div class="dv" style="top:436.8px"></div>
<svg class="pl" style="top:447.2px" viewBox="0 0 16 16"><rect x="0" y="2.5" width="16" height="11" rx="3" fill="#ff0000"/><path d="M6.400 5.300v5.400L10.800 8z" fill="#fff"/></svg>
<span class="pn" style="top:447.7px">Youtube</span>
<span class="pv" style="left:1048px;width:60px;text-align:center;top:446.2px">32</span>
<div class="pill" style="color:#475467;left:1126.5px;top:446.2px;width:28.5px;padding:0;text-align:center">0%</div>
<div class="dv" style="top:472.9px"></div>
<svg class="pl" style="top:483.3px" viewBox="0 0 16 16"><rect x="0" y="0" width="16" height="16" rx="3.2" fill="#000"/><path transform="translate(2.9 2.6) scale(0.45)" d="M12.186 24h-.007c-3.581-.024-6.334-1.205-8.184-3.509C2.35 18.44 1.5 15.586 1.472 12.01v-.017c.03-3.579.879-6.43 2.525-8.482C5.845 1.205 8.6.024 12.18 0h.014c2.746.02 5.043.725 6.826 2.098 1.677 1.29 2.858 3.13 3.509 5.467l-2.04.569c-1.104-3.96-3.898-5.984-8.304-6.015-2.91.022-5.11.936-6.540 2.717C4.307 6.504 3.616 8.914 3.589 12c.027 3.086.718 5.496 2.057 7.164 1.43 1.783 3.631 2.698 6.540 2.717 2.623-.02 4.358-.631 5.8-2.045 1.647-1.613 1.618-3.593 1.090-4.798-.31-.71-.873-1.3-1.634-1.75-.192 1.352-.622 2.446-1.284 3.272-.886 1.102-2.140 1.704-3.730 1.790-1.202.065-2.361-.218-3.259-.801-1.063-.689-1.685-1.740-1.752-2.964-.065-1.190.408-2.285 1.330-3.082.88-.76 2.119-1.207 3.583-1.291a13.853 13.853 0 0 1 3.020.142c-.126-.742-.375-1.332-.75-1.757-.513-.586-1.308-.883-2.359-.89h-.029c-.844 0-1.992.232-2.721 1.320L7.734 7.847c.98-1.454 2.568-2.256 4.478-2.256h.044c3.194.02 5.097 1.975 5.287 5.388.108.046.216.094.321.142 1.490.7 2.580 1.761 3.154 3.070.797 1.820.871 4.790-1.548 7.158-1.850 1.810-4.094 2.628-7.277 2.650Zm1.003-11.690c-.242 0-.487.007-.739.021-1.836.103-2.980.946-2.916 2.143.067 1.256 1.452 1.839 2.784 1.767 1.224-.065 2.818-.543 3.086-3.710a10.500 10.500 0 0 0-2.215-.221z" fill="#fff"/></svg>
<span class="pn" style="top:483.8px">Threads</span>
<div class="a" style="left:1076px;top:492px;width:5px;height:2px;background:#2d3a50"></div>
<div class="pill gry" style="left:1126.5px;top:482.3px;width:28.5px;padding:0;text-align:center">0%</div>
<div class="dv" style="top:509.0px"></div>
<svg class="pl" style="top:518.3px;left:837.4px;width:17.8px;height:17.8px" viewBox="0 0 16 16"><circle cx="8" cy="8" r="7.9" fill="#3f86ef"/><path d="M4.300 4.300c1.300.9 2.800 2.800 3.700 4.300.9-1.500 2.400-3.400 3.700-4.300.9-.7 2.400-1.200 2.400.5 0 .3-.2 2.800-.3 3.200-.4 1.400-1.800 1.800-3.100 1.600 2.200.4 2.800 1.600 1.600 2.800-2.300 2.300-3.300-.6-3.600-1.300L8 10.700c-.1.300-1.300 3.600-3.600 1.300-1.200-1.200-.6-2.400 1.600-2.800-1.300.2-2.700-.2-3.100-1.600-.1-.4-.3-2.900-.3-3.200 0-1.700 1.500-1.200 2.400-.5z" fill="#fff"/></svg>
<span class="pn" style="top:519.9px">Bluesky</span>
<div class="a" style="left:1076px;top:528px;width:5px;height:2px;background:#2d3a50"></div>
<div class="pill gry" style="left:1126.5px;top:518.4px;width:28.5px;padding:0;text-align:center">0%</div>
<div class="card" style="top:577px;height:200px"></div>
<svg class="a" style="left:544px;top:596px" width="16" height="12" viewBox="0 0 16 12"><path d="M1 10l4.500-4.500 3 3L14.500 2.500M10.500 2.500h4v4" fill="none" stroke="#1f2a44" stroke-width="1.35" stroke-linejoin="round"/></svg>
<span class="a" style="left:565.5px;top:595px;font-size:13px;font-weight:700;letter-spacing:-0.05px;color:#1f2a44;line-height:16px">Engagement</span>
<svg class="a" style="left:650.5px;top:597px" width="11" height="11" viewBox="0 0 11 11"><circle cx="5.5" cy="5.5" r="4.8" fill="none" stroke="#344054" stroke-width="1"/><path d="M5.5 5v3" stroke="#344054" stroke-width="1.1"/><circle cx="5.5" cy="3.4" r="0.6" fill="#344054"/></svg>
<svg class="a" style="left:563.5px;top:638.8px" width="16" height="16" viewBox="0 0 16 16"><circle cx="8" cy="8" r="7.9" fill="#1877f2"/><path d="M9.1 16V10.3h1.8l.3-2.2H9.1V6.800c0-.6.2-1.100 1.100-1.100h1.100V3.800c-.2 0-.9-.1-1.700-.1-1.700 0-2.800 1-2.800 2.900v1.600H5v2.200h1.800V16z" fill="#fff"/></svg>
<span class="a" style="left:592px;top:640.3px;font-size:11.5px;color:#3d4659;line-height:14px">Facebook</span>
<svg class="a" style="left:776px;top:640.3px" width="12" height="12" viewBox="0 0 12 12"><path d="M1 5.200h2.300v6H1z M3.300 5.200L5.600 1c.9 0 1.500.6 1.300 1.500l-.5 2.200h3.400c.8 0 1.300.7 1.100 1.400l-1 4c-.2.600-.7 1-1.300 1H3.300" fill="none" stroke="#8c95a6" stroke-width="0.9" stroke-linejoin="round"/></svg>
<span class="a" style="left:794.5px;top:640.3px;font-size:12.2px;color:#344054;line-height:14px;-webkit-text-stroke:0.25px #344054">50.53K</span>
<svg class="a" style="left:884.5px;top:641.3px" width="11" height="11" viewBox="0 0 11 11"><path d="M1.500 1h8c.3 0 .5.2.5.5v5.500c0 .3-.2.5-.5.5H5L2.500 9.800V7.500h-1c-.3 0-.5-.2-.5-.5V1.500c0-.3.2-.5.5-.5z" fill="none" stroke="#8c95a6" stroke-width="0.9" stroke-linejoin="round"/><path d="M3.300 4.300h.1M5.500 4.300h.1M7.700 4.300h.1" stroke="#8c95a6" stroke-width="1.1" stroke-linecap="round"/></svg>
<span class="a" style="left:901.5px;top:640.3px;font-size:12.2px;color:#344054;line-height:14px;-webkit-text-stroke:0.25px #344054">1.28K</span>
<svg class="a" style="left:991.5px;top:641.3px" width="11" height="11" viewBox="0 0 11 11"><path d="M6.500 1.200L10.300 5 6.500 8.800V6.700C4 6.600 2.200 7.600 1 9.800c.3-3.300 2.200-5.500 5.500-5.900z" fill="none" stroke="#8c95a6" stroke-width="0.9" stroke-linejoin="round"/></svg>
<span class="a" style="left:1009px;top:640.3px;font-size:12.2px;color:#344054;line-height:14px;-webkit-text-stroke:0.25px #344054">58</span>
<div class="pill grn" style="left:1098px;top:637.3px;width:69.5px;height:19px;line-height:19px;padding:0 0 0 17px">298.35%<svg style="position:absolute;left:7px;top:5px" width="8" height="9" viewBox="0 0 8 9"><path d="M4 8.500V1M1 4l3-3 3 3" fill="none" stroke="#16a34a" stroke-width="1.2"/></svg></div>
<div class="a" style="left:562.5px;top:669px;width:643px;height:1px;background:#eceef2"></div>
<svg class="a" style="left:563.5px;top:683.5px" width="16" height="16" viewBox="0 0 16 16"><rect x="0.3" y="0.3" width="15.4" height="15.4" rx="4" fill="url(#ig)"/><rect x="3" y="3" width="10" height="10" rx="3" fill="none" stroke="#fff" stroke-width="1.3"/><circle cx="8" cy="8" r="2.3" fill="none" stroke="#fff" stroke-width="1.3"/><circle cx="11.1" cy="4.9" r="0.7" fill="#fff"/></svg>
<span class="a" style="left:592px;top:685.0px;font-size:11.5px;color:#3d4659;line-height:14px">Instagram</span>
<svg class="a" style="left:776px;top:685.0px" width="12" height="12" viewBox="0 0 12 12"><path d="M1 5.200h2.300v6H1z M3.300 5.200L5.600 1c.9 0 1.500.6 1.300 1.500l-.5 2.200h3.400c.8 0 1.300.7 1.100 1.400l-1 4c-.2.600-.7 1-1.300 1H3.300" fill="none" stroke="#8c95a6" stroke-width="0.9" stroke-linejoin="round"/></svg>
<span class="a" style="left:794.5px;top:685.0px;font-size:12.2px;color:#344054;line-height:14px;-webkit-text-stroke:0.25px #344054">1.11K</span>
<svg class="a" style="left:884.5px;top:686.0px" width="11" height="11" viewBox="0 0 11 11"><path d="M1.500 1h8c.3 0 .5.2.5.5v5.500c0 .3-.2.5-.5.5H5L2.500 9.800V7.500h-1c-.3 0-.5-.2-.5-.5V1.500c0-.3.2-.5.5-.5z" fill="none" stroke="#8c95a6" stroke-width="0.9" stroke-linejoin="round"/><path d="M3.300 4.300h.1M5.500 4.300h.1M7.700 4.300h.1" stroke="#8c95a6" stroke-width="1.1" stroke-linecap="round"/></svg>
<span class="a" style="left:901.5px;top:685.0px;font-size:12.2px;color:#344054;line-height:14px;-webkit-text-stroke:0.25px #344054">47</span>
<svg class="a" style="left:991.5px;top:686.0px" width="11" height="11" viewBox="0 0 11 11"><path d="M6.500 1.200L10.300 5 6.500 8.800V6.700C4 6.600 2.200 7.600 1 9.800c.3-3.300 2.200-5.500 5.500-5.900z" fill="none" stroke="#8c95a6" stroke-width="0.9" stroke-linejoin="round"/></svg>
<span class="a" style="left:1009px;top:685.0px;font-size:12.2px;color:#344054;line-height:14px;-webkit-text-stroke:0.25px #344054">231</span>
<div class="pill red" style="left:1098px;top:682.0px;width:62.5px;height:19px;line-height:19px;padding:0 0 0 6px">29.35%<svg style="position:absolute;right:7.5px;top:4.5px" width="8" height="9" viewBox="0 0 8 9"><path d="M4 0.5v7.5M1 5l3 3 3-3" fill="none" stroke="#d92d20" stroke-width="1.2"/></svg></div>
</body></html>
